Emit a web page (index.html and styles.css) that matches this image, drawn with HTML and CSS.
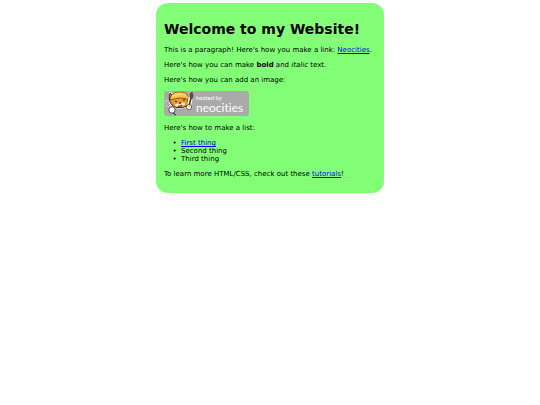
FILE: index.html
```html
<!DOCTYPE html>
<html lang="en">
<head>
    <meta charset="UTF-8">
    <meta name="viewport" content="width=device-width, initial-scale=1.0">
    <title>My Website</title>
    <link rel="stylesheet" href="styles.css">
</head>
<body>

    <main class="page">
        <h1>Welcome to my Website!</h1>

        <p>This is a paragraph! Here's how you make a link: <a href="https://neocities.org">Neocities</a>.</p>

        <p>Here's how you can make <strong>bold</strong> and <em>italic</em> text.</p>

        <p>Here's how you can add an image:</p>

        <div class="banner">
            <svg class="cat" viewBox="0 0 30 25" aria-hidden="true">
                <!-- head and hat -->
                <path d="M5 1 L9 2 Q14 -1 20 1 L24 4 L26 9 Q26 17 20 17 Q12 19 7 15 L5 12 Z" fill="#fff"/>
                <path d="M6 2 L9 5 Q16 3 22 5 L24 9 Q25 15 20 16 Q12 18 8 14 Q4 10 6 2 Z" fill="#ee9430" stroke="#38220f"/>
                <path d="M6 7 Q8 1 14 1 Q22 0 24 5 L26 9 Q16 5 7 9 Z" fill="#f6c34b" stroke="#65451a" stroke-width="0.8"/>
                <path d="M9 5 Q15 2 21 4" fill="none" stroke="#fbe093"/>
                <ellipse cx="14" cy="14" rx="3" ry="1.5" fill="#fff3dc"/>
                <ellipse cx="19" cy="13" rx="2" ry="1.5" fill="#fff3dc"/>
                <path d="M11 10 l2 1 M19 9 l2 0 M15 12 l2 0 M14 15 q2 1 4 -1" fill="none" stroke="#24170f"/>
                <!-- fork -->
                <path d="M1 9 L4 14 L8 19 M4 9 L4 14" fill="none" stroke="#fff" stroke-width="2"/>
                <path d="M1 9 L4 14 L8 19 M4 9 L4 14" fill="none" stroke="#556" stroke-width="0.8"/>
                <circle cx="8" cy="19" r="3.2" fill="#fff" stroke="#33271d" stroke-width="0.8"/>
                <path d="M9 22 L12 24" stroke="#222"/>
                <!-- brush -->
                <path d="M27 5 L25 15" stroke="#fff" stroke-width="4"/>
                <path d="M27 7 L25 15" stroke="#453126" stroke-width="1.5"/>
                <path d="M26 7 Q25 3 28 1 Q30 5 28 8 Z" fill="#8a4030" stroke="#3b2a22" stroke-width="0.5"/>
                <circle cx="25" cy="16" r="2.6" fill="#fff" stroke="#55422c" stroke-width="0.8"/>
                <path d="M24 16 L26 15" stroke="#d4a554"/>
            </svg>
            <div class="banner-text">
                <span class="hosted">hosted by</span>
                <span class="brand">neocities</span>
            </div>
        </div>

        <p>Here's how to make a list:</p>

        <ul>
            <li><a href="#first">First thing</a></li>
            <li>Second thing</li>
            <li>Third thing</li>
        </ul>

        <p>To learn more HTML/CSS, check out these <a href="https://neocities.org/tutorials">tutorials</a>!</p>
    </main>

</body>
</html>
```
FILE: styles.css
```css
body {
    margin: 3px;
    font-family: Verdana, "DejaVu Sans", sans-serif;
    font-size: 7px;
    line-height: 8px;
    color: #000;
    background-color: #fff;
}

.page {
    box-sizing: border-box;
    max-width: 228px;
    margin: 0 auto;
    padding: 8px;
    border-radius: 12px;
    background-color: #83ff77;
    display: flow-root;
}

h1 {
    margin: 9px 0 8px;
    font-size: 14px;
    line-height: 18px;
}

p {
    margin: 7px 0;
}

a {
    color: #00e;
}

ul {
    margin: 7px 0;
    padding-left: 17px;
    list-style-type: "•  ";
}

.banner {
    display: flex;
    width: 85px;
    height: 25px;
    margin-bottom: 8px;
    border-radius: 3px;
    background-color: #aaa;
    color: #fff;
}

.cat {
    width: 30px;
    height: 25px;
    flex: none;
}

.banner-text {
    display: flex;
    flex-direction: column;
    padding: 4px 0 0 2px;
    font-family: Lato, sans-serif;
    font-variant-ligatures: none;
}

.hosted {
    font-size: 6px;
    line-height: 6px;
}

.brand {
    font-size: 12px;
    line-height: 13px;
}
```
